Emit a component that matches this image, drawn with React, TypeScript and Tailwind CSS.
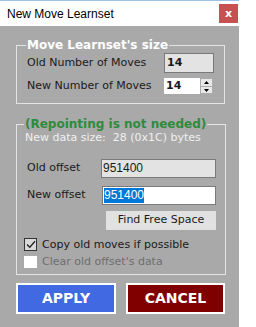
import React, { useState } from 'react';

const App = () => {
    const [copyOld, setCopyOld] = useState(true);
    const [newCount, setNewCount] = useState(14);

    return (
        <div className="w-[256px] h-[327px] bg-white flex font-['DejaVu_Sans',sans-serif] text-[11px] text-[#1a1a1a]">
            <div className="w-[239px] h-full flex flex-col bg-[#a9a9a9]">
                {/* Title bar */}
                <div className="h-[26px] bg-white border-t border-[#9cc3e6] flex items-center justify-between pl-[7px] pr-[1px]">
                    <span className="font-['Liberation_Sans',sans-serif] text-[12px] text-black">New Move Learnset</span>
                    <button className="w-[19px] h-[19px] bg-[#c75050] text-white text-[11px] font-bold leading-none flex items-center justify-center">x</button>
                </div>

                {/* Move Learnset's size */}
                <fieldset className="ml-[16px] mt-[12px] w-[209px] h-[66px] border border-[#e4e4e4] px-[10px]">
                    <legend className="px-[1px] -ml-[1px] text-[12px] font-bold text-white leading-[14px]">Move Learnset's size</legend>
                    <div className="flex items-center justify-between mt-[1px]">
                        <span>Old Number of Moves</span>
                        <div className="w-[50px] h-[20px] bg-[#e3e3e3] border border-[#7a7a7a] flex items-center pl-[2px] font-bold">14</div>
                    </div>
                    <div className="flex items-center justify-between mt-[5px]">
                        <span>New Number of Moves</span>
                        <div className="w-[49px] h-[16px] bg-white flex items-center mr-[1px]">
                            <span className="flex-1 pl-[2px] font-bold">{newCount}</span>
                            <div className="w-[13px] h-[16px] flex flex-col">
                                <button onClick={() => setNewCount(newCount + 1)} className="flex-1 bg-[#e8e8e8] border border-[#acacac] flex items-center justify-center">
                                    <svg width="5" height="3" viewBox="0 0 5 3"><path d="M0 3 L2.5 0 L5 3 Z" fill="#000" /></svg>
                                </button>
                                <button onClick={() => setNewCount(Math.max(0, newCount - 1))} className="flex-1 bg-[#e8e8e8] border border-t-0 border-[#acacac] flex items-center justify-center">
                                    <svg width="5" height="3" viewBox="0 0 5 3"><path d="M0 0 L2.5 3 L5 0 Z" fill="#000" /></svg>
                                </button>
                            </div>
                        </div>
                    </div>
                </fieldset>

                {/* Repointing */}
                <fieldset className="ml-[16px] mt-[13px] w-[209px] h-[158px] border border-[#e4e4e4] pl-[8px] pr-[9px]">
                    <legend className="px-[1px] -ml-[1px] text-[12px] font-bold text-[#2e8b3e] leading-[14px]">(Repointing is not needed)</legend>
                    <div className="text-[#f0f0f0] -mt-[1px]">New data size:&nbsp; 28 (0x1C) bytes</div>
                    <div className="flex items-center mt-[12px]">
                        <span className="w-[76px] pl-[2px]">Old offset</span>
                        <div className="w-[115px] h-[19px] bg-[#e3e3e3] border border-[#7a7a7a] flex items-center pl-[1px] font-['Liberation_Sans',sans-serif] text-[12px]">951400</div>
                    </div>
                    <div className="flex items-center mt-[8px]">
                        <span className="w-[77px] pl-[2px]">New offset</span>
                        <div className="w-[114px] h-[19px] bg-white border border-[#7a7a7a] flex items-center pl-[1px] font-['Liberation_Sans',sans-serif] text-[12px]">
                            <span className="bg-[#0078d7] text-white leading-[15px]">951400</span>
                        </div>
                    </div>
                    <div className="flex justify-end mt-[6px]">
                        <button className="w-[110px] h-[19px] bg-[#e1e1e1] text-[11px] text-[#1a1a1a]">Find Free Space</button>
                    </div>
                    <label className="flex items-center mt-[7px] gap-[5px] cursor-pointer">
                        <span onClick={() => setCopyOld(!copyOld)} className="w-[13px] h-[13px] border border-[#333] bg-[#d9d9d9] flex items-center justify-center ml-[-1px]">
                            {copyOld && (
                                <svg width="10" height="9" viewBox="0 0 10 9"><path d="M1 4.5 L3.8 7.3 L9 1.3" stroke="#222" strokeWidth="1.3" fill="none" /></svg>
                            )}
                        </span>
                        <span>Copy old moves if possible</span>
                    </label>
                    <div className="flex items-center mt-[1px] gap-[5px]">
                        <span className="w-[13px] h-[12px] bg-white ml-[-1px]" />
                        <span className="text-[#6e6e6e]">Clear old offset's data</span>
                    </div>
                </fieldset>

                {/* Buttons */}
                <div className="flex ml-[16px] mt-[8px] gap-[10px]">
                    <button className="w-[100px] h-[31px] bg-[#4169e1] border-2 border-white text-white font-bold text-[14px]">APPLY</button>
                    <button className="w-[99px] h-[31px] bg-[#800000] border-2 border-white text-white font-bold text-[14px]">CANCEL</button>
                </div>
            </div>
        </div>
    );
};

export default App;
